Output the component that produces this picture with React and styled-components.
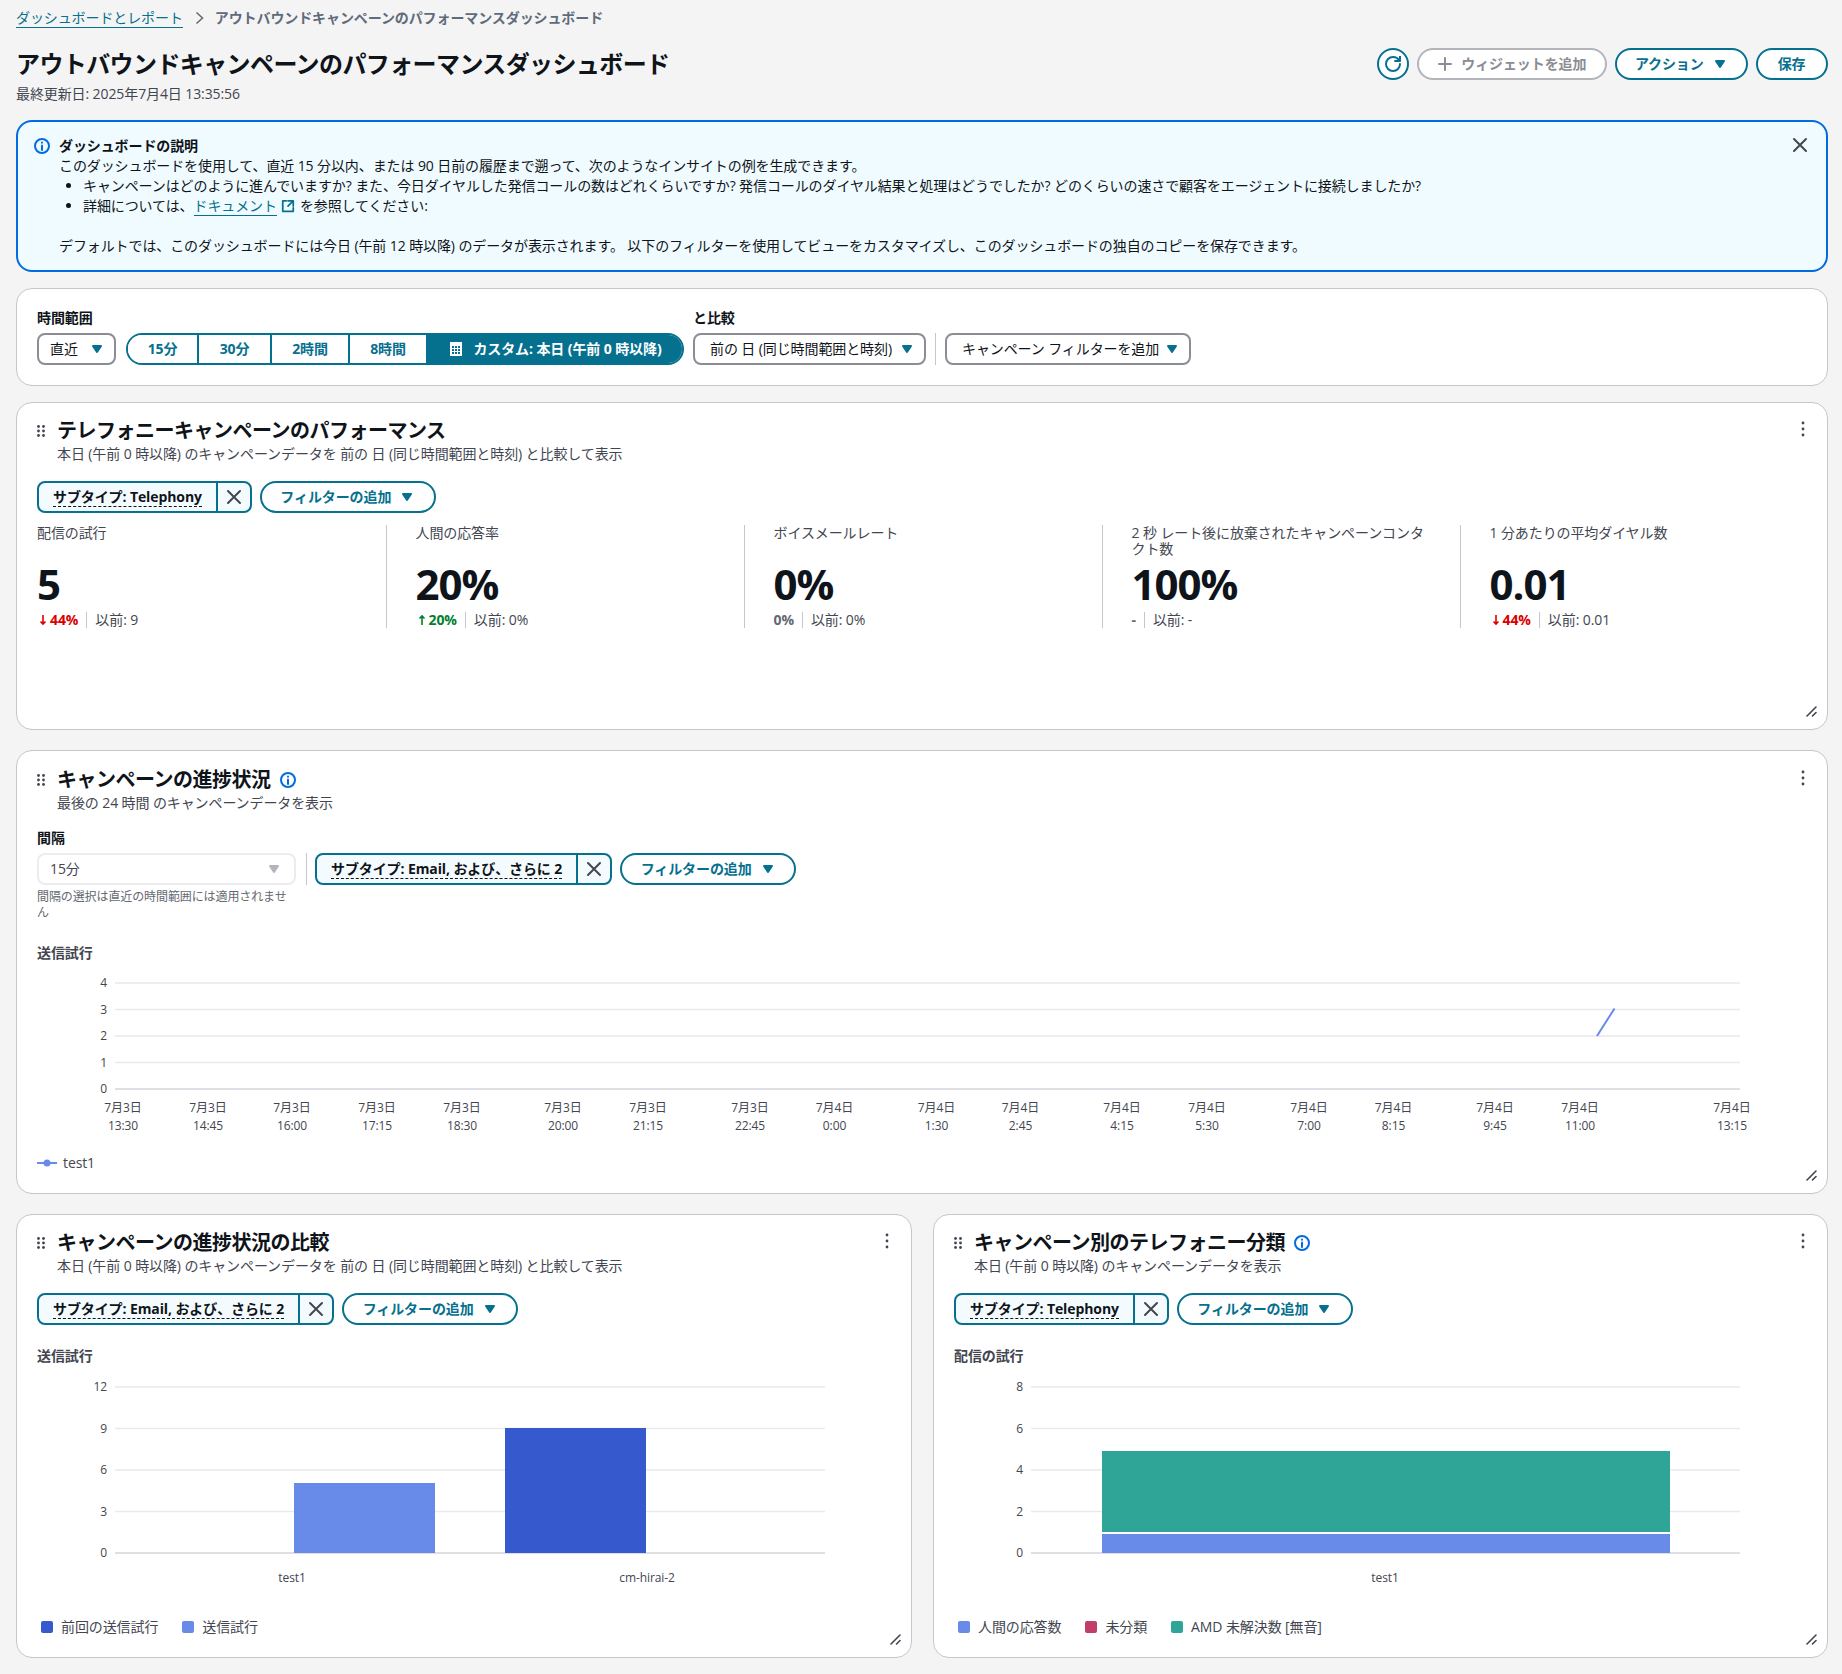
import React from "react";
import styled, { createGlobalStyle } from "styled-components";

const TEAL = "#06708f";

const GlobalStyle = createGlobalStyle`
	html, body {
		margin: 0;
		padding: 0;
		background: #f4f4f4;
	}
	body {
		font-family: "Open Sans", "Noto Sans CJK JP", sans-serif;
		font-size: 14px;
		line-height: 20px;
		letter-spacing: -0.1px;
		color: #0f141a;
	}
`;

const Icon = ({ size = 16, color = "currentColor", width = 2, children }) => (
	<svg
		width={size}
		height={size}
		viewBox="0 0 16 16"
		fill="none"
		stroke={color}
		strokeWidth={width}
		strokeLinecap="round"
		strokeLinejoin="round"
		style={{ flex: "none", display: "block" }}
	>
		{children}
	</svg>
);

const Caret = ({ color = TEAL }) => (
	<svg width="16" height="16" viewBox="0 0 16 16" style={{ flex: "none" }}>
		<path d="M4 5h8l-4 6-4-6z" fill={color} stroke={color} strokeWidth="2" strokeLinejoin="round" />
	</svg>
);

const InfoIcon = () => (
	<Icon color="#006ce0">
		<circle cx="8" cy="8" r="7" />
		<path d="M8 7.5V12" />
		<path d="M8 4.5v.2" />
	</Icon>
);

const CloseIcon = ({ color = "#424650" }) => (
	<Icon color={color}>
		<path d="m2 2 12 12M14 2 2 14" />
	</Icon>
);

const DragHandle = () => (
	<HandleSvg width="8" height="12" viewBox="0 0 8 12">
		{[1.5, 6, 10.5].map((y) => (
			<g key={y} fill="#424650">
				<circle cx="1.5" cy={y} r="1.4" />
				<circle cx="6.5" cy={y} r="1.4" />
			</g>
		))}
	</HandleSvg>
);

const Kebab = () => (
	<KebabSvg width="4" height="16" viewBox="0 0 4 16">
		<circle cx="2" cy="2" r="1.4" fill="#424650" />
		<circle cx="2" cy="8" r="1.4" fill="#424650" />
		<circle cx="2" cy="14" r="1.4" fill="#424650" />
	</KebabSvg>
);

const ResizeHandle = () => (
	<ResizeSvg width="11" height="11" viewBox="0 0 11 11">
		<path d="M1 10 10 1" stroke="#424650" strokeWidth="1.6" strokeLinecap="round" />
		<path d="M6.5 10 10 6.5" stroke="#424650" strokeWidth="1.6" strokeLinecap="round" />
	</ResizeSvg>
);

const Arrow = ({ dir, color }) => (
	<ArrowSvg width="8" height="12" viewBox="0 0 8 12">
		<path
			d={dir === "up" ? "M4 11V2M1.5 4.5 4 2l2.5 2.5" : "M4 1v9M1.5 7.5 4 10l2.5-2.5"}
			fill="none"
			stroke={color}
			strokeWidth="1.6"
		/>
	</ArrowSvg>
);

const CardHead = ({ title, desc, info }) => (
	<HeadRow>
		<DragHandle />
		<HeadText>
			<TitleRow>
				<CardTitle>{title}</CardTitle>
				{info && <InfoIcon />}
			</TitleRow>
			<Muted>{desc}</Muted>
		</HeadText>
		<Kebab />
	</HeadRow>
);

const FilterChip = ({ label }) => (
	<Chip>
		<ChipLabel>
			<ChipText>{label}</ChipText>
		</ChipLabel>
		<ChipClose>
			<CloseIcon />
		</ChipClose>
	</Chip>
);

const AddFilter = () => (
	<OutlineButton $px={18.5}>
		フィルターの追加
		<Caret />
	</OutlineButton>
);

const Stat = ({ first, label, value, delta, dir, color, prev }) => (
	<StatCell $first={first}>
		<StatLabel>{label}</StatLabel>
		<StatValue>{value}</StatValue>
		<StatSub>
			<Delta $color={color}>
				{dir && <Arrow dir={dir} color={color} />}
				{delta}
			</Delta>
			<SubSep />
			<Muted>{prev}</Muted>
		</StatSub>
	</StatCell>
);

const LINE_TICKS = [
	["7月3日", "13:30", 123], ["7月3日", "14:45", 208], ["7月3日", "16:00", 292],
	["7月3日", "17:15", 377], ["7月3日", "18:30", 462], ["7月3日", "20:00", 563],
	["7月3日", "21:15", 648], ["7月3日", "22:45", 750], ["7月4日", "0:00", 834.5],
	["7月4日", "1:30", 936.5], ["7月4日", "2:45", 1020.5], ["7月4日", "4:15", 1122],
	["7月4日", "5:30", 1207], ["7月4日", "7:00", 1309], ["7月4日", "8:15", 1393.5],
	["7月4日", "9:45", 1495], ["7月4日", "11:00", 1580], ["7月4日", "13:15", 1732],
];

const Grid = ({ ys, labels, x1, x2 }) =>
	ys.map((y, i) => (
		<g key={y}>
			<line x1={x1} x2={x2} y1={y} y2={y} stroke={i === ys.length - 1 ? "#dedee3" : "#e9e9ee"} strokeWidth={i === ys.length - 1 ? 2 : 1.4} />
			<AxisText x={x1 - 8} y={y + 4} textAnchor="end">
				{labels[i]}
			</AxisText>
		</g>
	));

// viewBox uses page coordinates, so the numbers read straight off the screenshot
const LineChart = () => (
	<ChartSvg $mt={2} width="1768" height="170" viewBox="37 965 1768 170">
		<Grid ys={[983, 1009.5, 1036, 1062.5, 1089]} labels={[4, 3, 2, 1, 0]} x1={115} x2={1740} />
		<line x1="1597" y1="1036" x2="1614.5" y2="1008.5" stroke="#688ae8" strokeWidth="2" />
		{LINE_TICKS.map(([d, t, x]) => (
			<g key={x}>
				<AxisText x={x} y={1112} textAnchor="middle">{d}</AxisText>
				<AxisText x={x} y={1130} textAnchor="middle">{t}</AxisText>
			</g>
		))}
	</ChartSvg>
);

const BarChart = () => (
	<ChartSvg $mt={1} width="850" height="228" viewBox="37 1367 850 228">
		<Grid ys={[1387, 1428.5, 1470, 1511.5, 1553]} labels={[12, 9, 6, 3, 0]} x1={115} x2={825} />
		<rect x="294" y="1483" width="141" height="70" fill="#688ae8" />
		<rect x="505" y="1428" width="141" height="125" fill="#3759ce" />
		<AxisText x="292" y="1582" textAnchor="middle">test1</AxisText>
		<AxisText x="647" y="1582" textAnchor="middle">cm-hirai-2</AxisText>
	</ChartSvg>
);

const StackChart = () => (
	<ChartSvg $mt={1} width="850" height="228" viewBox="954 1367 850 228">
		<Grid ys={[1387, 1428.5, 1470, 1511.5, 1553]} labels={[8, 6, 4, 2, 0]} x1={1031} x2={1740} />
		<rect x="1102" y="1451" width="568" height="81" fill="#2ea597" />
		<rect x="1102" y="1534" width="568" height="19" fill="#688ae8" />
		<AxisText x="1385" y="1582" textAnchor="middle">test1</AxisText>
	</ChartSvg>
);

const App = () => {
	return (
		<Page>
			<GlobalStyle />
			<Breadcrumb>
				<CrumbLink>ダッシュボードとレポート</CrumbLink>
				<svg width="16" height="16" viewBox="0 0 16 16" fill="none" stroke="#656871" strokeWidth="1.5">
					<path d="m5.5 2.5 6 5.5-6 5.5" />
				</svg>
				<CrumbCurrent>アウトバウンドキャンペーンのパフォーマンスダッシュボード</CrumbCurrent>
			</Breadcrumb>

			<PageHeader>
				<div>
					<PageTitle>アウトバウンドキャンペーンのパフォーマンスダッシュボード</PageTitle>
					<Muted>最終更新日: 2025年7月4日 13:35:56</Muted>
				</div>
				<HeaderActions>
					<RoundButton>
						<Icon>
							<path d="M10 5h5V0" />
							<path d="M15 8a6.957 6.957 0 0 1-7 7 6.957 6.957 0 0 1-7-7 6.957 6.957 0 0 1 7-7 6.87 6.87 0 0 1 6.3 4" />
						</Icon>
					</RoundButton>
					<OutlineButton $disabled $px={18.5}>
						<Icon>
							<path d="M2 8h12M8 2v12" />
						</Icon>
						ウィジェットを追加
					</OutlineButton>
					<OutlineButton $px={18}>
						アクション
						<Caret />
					</OutlineButton>
					<OutlineButton $px={20}>保存</OutlineButton>
				</HeaderActions>
			</PageHeader>

			<Alert>
				<InfoIcon />
				<AlertBody>
					<strong>ダッシュボードの説明</strong>
					<div>このダッシュボードを使用して、直近 15 分以内、または 90 日前の履歴まで遡って、次のようなインサイトの例を生成できます。</div>
					<AlertList>
						<li>キャンペーンはどのように進んでいますか? また、今日ダイヤルした発信コールの数はどれくらいですか? 発信コールのダイヤル結果と処理はどうでしたか? どのくらいの速さで顧客をエージェントに接続しましたか?</li>
						<li>
							詳細については、<DocLink>ドキュメント</DocLink>
							<ExternalIcon>
								<Icon size={14} color={TEAL}>
									<path d="M14 8.01v-6H8M14.02 2 8 8.01M6 2.01H2v12h12V10" />
								</Icon>
							</ExternalIcon>
							を参照してください:
						</li>
					</AlertList>
					<br />
					<div>デフォルトでは、このダッシュボードには今日 (午前 12 時以降) のデータが表示されます。 以下のフィルターを使用してビューをカスタマイズし、このダッシュボードの独自のコピーを保存できます。</div>
				</AlertBody>
				<AlertClose>
					<CloseIcon />
				</AlertClose>
			</Alert>

			<TimePanel>
				<div>
					<FieldLabel>時間範囲</FieldLabel>
					<ControlRow>
						<SelectBox $width={79}>
							直近
							<Caret />
						</SelectBox>
						<Segmented>
							<Segment $width={71}>15分</Segment>
							<Segment $width={73}>30分</Segment>
							<Segment $width={78}>2時間</Segment>
							<Segment $width={78}>8時間</Segment>
							<Segment $active $width={254}>
								<svg width="16" height="16" viewBox="0 0 16 16">
									<path fillRule="evenodd" fill="#fff" d="M2 1h12v14H2zM4 5v2h2V5zm3 0v2h2V5zm3 0v2h2V5zM4 8v2h2V8zm3 0v2h2V8zm3 0v2h2V8zM4 11v2h2v-2zm3 0v2h2v-2zm3 0v2h2v-2z" />
								</svg>
								カスタム: 本日 (午前 0 時以降)
							</Segment>
						</Segmented>
					</ControlRow>
				</div>
				<div>
					<FieldLabel>と比較</FieldLabel>
					<SelectBox $width={233}>
						前の 日 (同じ時間範囲と時刻)
						<Caret />
					</SelectBox>
				</div>
				<VDivider />
				<SelectBox $width={246}>
					キャンペーン フィルターを追加
					<Caret />
				</SelectBox>
			</TimePanel>

			<Card $height={328} $mb={20}>
				<CardHead
					title="テレフォニーキャンペーンのパフォーマンス"
					desc="本日 (午前 0 時以降) のキャンペーンデータを 前の 日 (同じ時間範囲と時刻) と比較して表示"
				/>
				<FilterRow $mt={17}>
					<FilterChip label="サブタイプ: Telephony" />
					<AddFilter />
				</FilterRow>
				<StatGrid>
					<Stat first label="配信の試行" value="5" delta="44%" dir="down" color="#db0000" prev="以前: 9" />
					<Stat label="人間の応答率" value="20%" delta="20%" dir="up" color="#00802f" prev="以前: 0%" />
					<Stat label="ボイスメールレート" value="0%" delta="0%" color="#656871" prev="以前: 0%" />
					<Stat label="2 秒 レート後に放棄されたキャンペーンコンタクト数" value="100%" delta="-" color="#656871" prev="以前: -" />
					<Stat label="1 分あたりの平均ダイヤル数" value="0.01" delta="44%" dir="down" color="#db0000" prev="以前: 0.01" />
				</StatGrid>
				<ResizeHandle />
			</Card>

			<Card $height={444} $mb={20} $pt={16}>
				<CardHead title="キャンペーンの進捗状況" desc="最後の 24 時間 のキャンペーンデータを表示" info />
				<IntervalRow>
					<IntervalField>
						<FieldLabel>間隔</FieldLabel>
						<DisabledSelect>
							15分
							<Caret color="#b4b4bb" />
						</DisabledSelect>
						<Hint>間隔の選択は直近の時間範囲には適用されません</Hint>
					</IntervalField>
					<IntervalFilters>
						<VDivider />
						<FilterChip label="サブタイプ: Email, および、さらに 2" />
						<AddFilter />
					</IntervalFilters>
				</IntervalRow>
				<ChartTitle>送信試行</ChartTitle>
				<LineChart />
				<Legend $mt={18}>
					<LegendItem>
						<svg width="20" height="10" viewBox="0 0 20 10">
							<path d="M0 5h20" stroke="#688ae8" strokeWidth="2" />
							<circle cx="10" cy="5" r="3.5" fill="#688ae8" />
						</svg>
						test1
					</LegendItem>
				</Legend>
				<ResizeHandle />
			</Card>

			<BottomRow>
				<Card $height={444}>
					<CardHead
						title="キャンペーンの進捗状況の比較"
						desc="本日 (午前 0 時以降) のキャンペーンデータを 前の 日 (同じ時間範囲と時刻) と比較して表示"
					/>
					<FilterRow $mt={17}>
						<FilterChip label="サブタイプ: Email, および、さらに 2" />
						<AddFilter />
					</FilterRow>
					<ChartTitle $mt={21}>送信試行</ChartTitle>
					<BarChart />
					<Legend $mt={22}>
						<LegendItem>
							<Swatch $color="#3759ce" />
							前回の送信試行
						</LegendItem>
						<LegendItem>
							<Swatch $color="#688ae8" />
							送信試行
						</LegendItem>
					</Legend>
					<ResizeHandle />
				</Card>
				<Card $height={444}>
					<CardHead title="キャンペーン別のテレフォニー分類" desc="本日 (午前 0 時以降) のキャンペーンデータを表示" info />
					<FilterRow $mt={17}>
						<FilterChip label="サブタイプ: Telephony" />
						<AddFilter />
					</FilterRow>
					<ChartTitle $mt={21}>配信の試行</ChartTitle>
					<StackChart />
					<Legend $mt={22}>
						<LegendItem>
							<Swatch $color="#688ae8" />
							人間の応答数
						</LegendItem>
						<LegendItem>
							<Swatch $color="#c33d69" />
							未分類
						</LegendItem>
						<LegendItem>
							<Swatch $color="#2ea597" />
							AMD 未解決数 [無音]
						</LegendItem>
					</Legend>
					<ResizeHandle />
				</Card>
			</BottomRow>
		</Page>
	);
};

const Page = styled.div`
	width: 1842px;
	box-sizing: border-box;
	padding: 8px 14.5px 16px 16px;
`;

const Breadcrumb = styled.nav`
	display: flex;
	align-items: center;
	gap: 8px;
	height: 20px;
`;

const CrumbLink = styled.a`
	color: ${TEAL};
	border-bottom: 1px solid ${TEAL};
	line-height: 19px;
`;

const CrumbCurrent = styled.span`
	color: #5f6b7a;
	font-weight: 700;
`;

const PageHeader = styled.header`
	display: flex;
	justify-content: space-between;
	align-items: flex-start;
	margin: 20px 0 16px;
`;

const PageTitle = styled.h1`
	margin: 1px 0 5px;
	font-size: 24px;
	line-height: 30px;
	font-weight: 700;
	letter-spacing: -0.6px;
`;

const Muted = styled.div`
	color: #424650;
`;

const HeaderActions = styled.div`
	display: flex;
	gap: 8px;
`;

const RoundButton = styled.button`
	width: 32px;
	height: 32px;
	padding: 0;
	display: flex;
	align-items: center;
	justify-content: center;
	border: 2px solid ${TEAL};
	border-radius: 50%;
	background: #fff;
	color: ${TEAL};
`;

const OutlineButton = styled.button`
	display: inline-flex;
	align-items: center;
	gap: 8px;
	height: 32px;
	box-sizing: border-box;
	padding: 0 ${(p) => p.$px}px;
	border: 2px solid ${(p) => (p.$disabled ? "#b4b4bb" : TEAL)};
	border-radius: 16px;
	background: #fff;
	color: ${(p) => (p.$disabled ? "#8c8c94" : TEAL)};
	font: inherit;
	font-weight: 700;
	letter-spacing: -0.1px;
	white-space: nowrap;
`;

const Alert = styled.section`
	display: flex;
	align-items: flex-start;
	height: 152px;
	box-sizing: border-box;
	padding: 16px 16px 14px 16px;
	border: 2px solid #006ce0;
	border-radius: 16px;
	background: #f0fbff;
	margin-bottom: 16px;
`;

const AlertBody = styled.div`
	flex: 1;
	margin: -2px 0 0 9px;
`;

const AlertList = styled.ul`
	margin: 0;
	padding-left: 24px;
`;

const DocLink = styled.a`
	color: ${TEAL};
	border-bottom: 1px solid ${TEAL};
`;

const ExternalIcon = styled.span`
	display: inline-block;
	height: 14px;
	line-height: 0;
	vertical-align: -2px;
	margin: 0 5px 0 4px;
`;

const AlertClose = styled.div`
	display: flex;
	margin: -1px 2px 0 0;
`;

const TimePanel = styled.section`
	display: flex;
	align-items: flex-end;
	gap: 9px;
	height: 98px;
	box-sizing: border-box;
	padding: 0 20px 20px;
	border: 1px solid #c6c6cd;
	border-radius: 16px;
	background: #fff;
	margin-bottom: 16px;
`;

const FieldLabel = styled.div`
	font-weight: 700;
	color: #0f141a;
	margin-bottom: 5px;
`;

const ControlRow = styled.div`
	display: flex;
	gap: 10px;
`;

const SelectBox = styled.div`
	display: flex;
	align-items: center;
	justify-content: space-between;
	width: ${(p) => p.$width}px;
	height: 32px;
	box-sizing: border-box;
	padding: 0 9px 0 ${(p) => (p.$width < 100 ? 11 : 15)}px;
	border: 2px solid #8c8c94;
	border-radius: 8px;
	background: #fff;
	white-space: nowrap;
`;

const Segmented = styled.div`
	display: flex;
	height: 32px;
	box-sizing: border-box;
	border: 2px solid ${TEAL};
	border-radius: 16px;
	overflow: hidden;
`;

const Segment = styled.div`
	display: flex;
	align-items: center;
	justify-content: center;
	gap: 9px;
	width: ${(p) => p.$width}px;
	box-sizing: border-box;
	font-weight: 700;
	white-space: nowrap;
	color: ${(p) => (p.$active ? "#fff" : TEAL)};
	background: ${(p) => (p.$active ? TEAL : "#fff")};
	border-right: ${(p) => (p.$active ? 0 : `2px solid ${TEAL}`)};
`;

const VDivider = styled.div`
	width: 1px;
	height: 32px;
	background: #c6c6cd;
	flex: none;
`;

const Card = styled.section`
	position: relative;
	height: ${(p) => p.$height}px;
	box-sizing: border-box;
	min-width: 0;
	padding: ${(p) => p.$pt || 15}px 20px 0;
	border: 1px solid #c6c6cd;
	border-radius: 16px;
	background: #fff;
	margin-bottom: ${(p) => p.$mb || 0}px;
`;

const HeadRow = styled.div`
	display: flex;
	align-items: flex-start;
`;

const HandleSvg = styled.svg`
	flex: none;
	margin: 7px 12px 0 0;
`;

const KebabSvg = styled.svg`
	flex: none;
	margin: 3px 2px 0 auto;
`;

const HeadText = styled.div`
	min-width: 0;
`;

const TitleRow = styled.div`
	display: flex;
	align-items: center;
	gap: 9px;
`;

const CardTitle = styled.h2`
	margin: 0;
	font-size: 20px;
	line-height: 26px;
	font-weight: 700;
	letter-spacing: -0.5px;
`;

const FilterRow = styled.div`
	display: flex;
	gap: 8px;
	margin-top: ${(p) => p.$mt}px;
`;

const Chip = styled.div`
	display: flex;
	height: 32px;
	box-sizing: border-box;
	border: 2px solid ${TEAL};
	border-radius: 8px;
	background: #f3fbfe;
	white-space: nowrap;
	flex: none;
`;

const ChipLabel = styled.div`
	display: flex;
	align-items: center;
	padding: 0 14px;
	border-right: 2px solid ${TEAL};
`;

const ChipText = styled.span`
	font-weight: 700;
	line-height: 18px;
	border-bottom: 1px dashed #0f141a;
`;

const ChipClose = styled.div`
	display: flex;
	align-items: center;
	padding: 0 8px;
`;

const StatGrid = styled.div`
	display: grid;
	grid-template-columns: 348.5px repeat(4, 358px);
	margin-top: 12px;
`;

const StatCell = styled.div`
	height: 103px;
	box-sizing: border-box;
	padding: 0 30px 0 ${(p) => (p.$first ? 0 : 29)}px;
	border-left: ${(p) => (p.$first ? 0 : "1px solid #c6c6cd")};
`;

const StatLabel = styled.div`
	height: 32px;
	line-height: 16px;
	color: #424650;
`;

const StatValue = styled.div`
	margin-top: 3px;
	font-size: 42px;
	line-height: 48px;
	font-weight: 700;
	letter-spacing: -1px;
	color: #0f141a;
`;

const StatSub = styled.div`
	display: flex;
	align-items: center;
	height: 16px;
	margin-top: 4px;
	line-height: 16px;
`;

const ArrowSvg = styled.svg`
	flex: none;
	margin: 0 3px 0 2px;
`;

const Delta = styled.span`
	display: inline-flex;
	align-items: center;
	font-weight: 700;
	color: ${(p) => p.$color};
`;

const SubSep = styled.span`
	width: 1px;
	height: 16px;
	background: #c6c6cd;
	margin: 0 8px;
`;

const ResizeSvg = styled.svg`
	position: absolute;
	right: 10px;
	bottom: 12px;
`;

const IntervalRow = styled.div`
	display: flex;
	gap: 10px;
	margin-top: 15px;
`;

const IntervalField = styled.div`
	width: 259px;
	flex: none;
`;

const DisabledSelect = styled.div`
	display: flex;
	align-items: center;
	justify-content: space-between;
	height: 32px;
	box-sizing: border-box;
	padding: 0 12px 0 11px;
	border: 2px solid #ebebf0;
	border-radius: 8px;
	color: #424650;
`;

const Hint = styled.div`
	margin-top: 4px;
	font-size: 12px;
	line-height: 16px;
	color: #656871;
`;

const IntervalFilters = styled.div`
	display: flex;
	gap: 8px;
	margin-top: 25px;
	height: 32px;
`;

const ChartTitle = styled.div`
	margin-top: ${(p) => p.$mt || 22}px;
	font-weight: 700;
	color: #424650;
`;

const ChartSvg = styled.svg`
	display: block;
	margin-top: ${(p) => p.$mt || 0}px;
`;

const AxisText = styled.text`
	font-size: 12px;
	fill: #424650;
`;

const Legend = styled.div`
	display: flex;
	gap: 20px;
	margin-top: ${(p) => p.$mt}px;
	color: #424650;
`;

const LegendItem = styled.div`
	display: flex;
	align-items: center;
	gap: 6px;
`;

const Swatch = styled.span`
	width: 12px;
	height: 12px;
	border-radius: 2px;
	margin: 0 2px 0 4px;
	background: ${(p) => p.$color};
`;

const BottomRow = styled.div`
	display: grid;
	grid-template-columns: 896px minmax(0, 1fr);
	gap: 21px;
`;

export default App;
